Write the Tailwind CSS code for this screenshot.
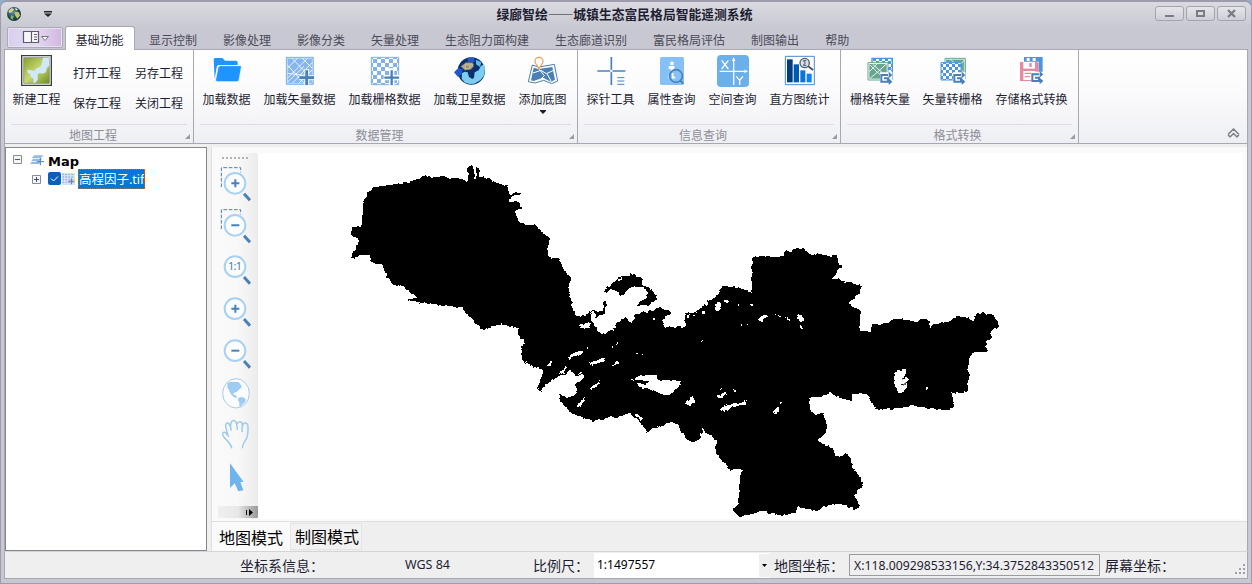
<!DOCTYPE html>
<html lang="zh-CN">
<head>
<meta charset="utf-8">
<title>绿廊智绘——城镇生态富民格局智能遥测系统</title>
<script src="https://cdn.jsdelivr.net/npm/@tailwindcss/browser@4"></script>
</head>
<body class="w-[1252px] h-[584px] overflow-hidden bg-[#8fb0d0] font-['Noto_Sans','Noto_Sans_CJK_SC',sans-serif] text-[12px] text-[#1e1e32]">
<svg class="absolute w-0 h-0">
  <defs>
    <pattern id="chk" width="24" height="24" patternUnits="userSpaceOnUse"><path d="M0 0h12v12H0zM12 12h12v12H12z" fill="#7fb2e5"/></pattern>
    <pattern id="chk2" width="18" height="18" patternUnits="userSpaceOnUse"><path d="M0 0h9v9H0zM9 9h9v9H9z" fill="#4a96e3"/></pattern>
    <symbol id="arrows" viewBox="0 0 38 40"><path d="M0 2h38v36H0z" fill="#fff" stroke="none"/><path d="M24 10H4v20h20M12 20h12v10h8" fill="none" stroke="#4a7fb8" stroke-width="6"/><path d="M26 0l11 10-11 10zM26 20l11 10-11 10z" fill="#4a7fb8"/></symbol>
    <symbol id="lens" viewBox="0 0 90 94"><circle cx="36" cy="38" r="31" fill="#fbfdff" stroke="#a9d1f1" stroke-width="6"/><path d="M63 69l18 20" stroke="#4a80b8" stroke-width="9"/></symbol>
    <filter id="rough" x="0" y="0" width="100%" height="100%" color-interpolation-filters="sRGB">
      <feTurbulence type="fractalNoise" baseFrequency=".22" numOctaves="2" seed="4" result="n"/>
      <feDisplacementMap in="SourceGraphic" in2="n" scale="4" xChannelSelector="R" yChannelSelector="G"/>
      <feComponentTransfer><feFuncA type="discrete" tableValues="0 1"/></feComponentTransfer>
    </filter>
  </defs>
</svg>
<div class="flex flex-col w-full h-full rounded-t-[7px] border-t-2 border-x border-[#9c9cac] bg-[#c8c8d2]">
  <!-- title bar -->
  <header class="flex items-center h-[25px] shrink-0 rounded-t-[6px] bg-linear-to-b from-[#dadae0] to-[#c9c9d2] pl-[6px] pr-[5px] pb-[2px]">
    <svg class="w-[14px] h-[14px]" viewBox="0 0 42 42"><defs><radialGradient id="gb" cx=".4" cy=".35"><stop offset="0" stop-color="#5c97a8"/><stop offset="1" stop-color="#143c46"/></radialGradient></defs><circle cx="21" cy="21" r="21" fill="url(#gb)"/><path d="M4 12L14 3l8 4-8 8-6 4z" fill="#dcd68a"/><path d="M22 14l14 2 3 10-8 9-6-9z" fill="#c9c16a"/><path d="M12 24l8 4-2 10-8-4z" fill="#8fb052"/><path d="M24 2l9 5-6 4z" fill="#e9ecc8"/></svg>
    <svg class="ml-[23px] mt-px w-[8px] h-[6px]" viewBox="0 0 8 6"><path d="M0 0h8v1.400H0zM0 2.500h8L4 6z" fill="#222230"/></svg>
    <h1 class="flex-1 text-center font-bold text-[12.800px] leading-none pl-[42px] pt-[2px] font-['Noto_Sans_CJK_SC',sans-serif]">绿廊智绘——城镇生态富民格局智能遥测系统</h1>
    <div class="flex gap-[2px]">
      <button class="w-[29px] h-[15px] rounded-[3px] border border-[#a4a4ae] bg-linear-to-b from-[#e6e6ea] to-[#cecfd6]"><svg class="w-full h-full" viewBox="0 0 27 13"><path d="M9 8h9v2H9z" fill="#7b7b88"/></svg></button>
      <button class="w-[29px] h-[15px] rounded-[3px] border border-[#a4a4ae] bg-linear-to-b from-[#e6e6ea] to-[#cecfd6]"><svg class="w-full h-full" viewBox="0 0 27 13"><path d="M10 4h7v5h-7z" fill="none" stroke="#7b7b88" stroke-width="2"/></svg></button>
      <button class="w-[29px] h-[15px] rounded-[3px] border border-[#a4a4ae] bg-linear-to-b from-[#e6e6ea] to-[#cecfd6]"><svg class="w-full h-full" viewBox="0 0 27 13"><path d="M10 3l7 7M17 3l-7 7" stroke="#7b7b88" stroke-width="2.300"/></svg></button>
    </div>
  </header>
  <!-- ribbon tabs -->
  <nav class="flex h-[22px] shrink-0 pl-[6px] text-[#4a4a58] leading-[27px] relative z-10">
    <button class="w-[56px] h-[21px] mr-[2px] rounded-[2px] border border-[#a9a9b8] outline outline-[#e4e2ee] -outline-offset-2 bg-linear-to-r from-[#d9cfee] via-[#e4dbf2] to-[#d2b5e0]">
      <svg class="w-full h-full" viewBox="0 0 54 19"><path d="M15.500 3.500h15v11h-15zM23.500 3.500v11M26 6.500h3M26 9h3M26 11.500h3" fill="#f8f8fa" stroke="#5c5c66" stroke-width="1.200"/><path d="M33.500 8.500h7l-3.500 4z" fill="#fff" stroke="#777783"/></svg>
    </button>
    <a class="w-[70px] h-[24px] -mt-px pr-px rounded-t-[3px] border border-b-0 border-[#a8a8b4] bg-white text-center text-[#1e1e32] leading-[27px]">基础功能</a>
    <a class="px-[13px] ml-px">显示控制</a><a class="px-[13px]">影像处理</a><a class="px-[13px]">影像分类</a><a class="px-[13px]">矢量处理</a><a class="px-[13px]">生态阻力面构建</a><a class="px-[13px]">生态廊道识别</a><a class="px-[13px]">富民格局评估</a><a class="px-[13px]">制图输出</a><a class="px-[13px]">帮助</a>
  </nav>
  <!-- ribbon -->
  <section class="flex h-[95px] shrink-0 ml-[3px] mr-[3px] border border-t-[#a8a8b4] border-[#a8a8b4] bg-linear-to-b from-white via-[#fafafc] to-[#eeeff3] leading-[16px]">
    <div class="flex flex-col w-[189px] border-r border-[#a8a8b4]">
      <div class="flex h-[74px] pl-[7px] pt-[5px]">
        <div class="flex flex-col items-center w-[49px]">
          <svg class="w-[31px] h-[31px]" viewBox="0 0 93 93"><defs><linearGradient id="np" x2="1" y2="1"><stop offset="0" stop-color="#86a02c"/><stop offset=".5" stop-color="#c8d873"/><stop offset="1" stop-color="#6e9018"/></linearGradient></defs><path d="M2 2h89v89H2z" fill="#fff" stroke="#39403a" stroke-width="4"/><path d="M8 8h77v77H8z" fill="url(#np)" stroke="#777" stroke-width="2"/><path d="M66 8h19v24l-8 8-2 12-10 4-10-2-6 6 2 12-6 10-9 2 2-12-8-6-2-8-8-4-2-8 8-2 12 4 10-8 10-4 4-8z" fill="#cfe8fa"/></svg>
          <span class="mt-[6px]">新建工程</span>
        </div>
        <div class="grid grid-cols-[62px_50px] grid-rows-[30px_30px] pl-[12px] pt-[4px] items-center w-[125px] whitespace-nowrap"><span>打开工程</span><span>另存工程</span><span>保存工程</span><span>关闭工程</span></div>
      </div>
      <div class="relative mx-[6px] h-[19px] pr-3 text-center leading-[21px] text-[#8d8d98] border-t border-[#dcdce2]">地图工程<svg class="absolute right-[-3px] bottom-[4px] w-[5px] h-[5px]" viewBox="0 0 5 5"><path d="M5 0v5H0z" fill="#9a9aa4"/></svg></div>
    </div>
    <div class="flex flex-col w-[384px] border-r border-[#a8a8b4]">
      <div class="flex gap-[12px] h-[74px] pl-[8px] pt-[5px] whitespace-nowrap">
        <div class="flex flex-col items-center w-[49px]"><svg class="w-[32px] h-[32px]" viewBox="0 0 96 96"><path d="M8 13l3-4h23l8 8h33q5 0 5 5v8H24q-6 0-7 7L11 72z" fill="#1f94ff"/><path d="M28 32h60q4 0 3 5l-7 38q-1 5-6 5H18q-5 0-4-6l7-36q1-6 7-6z" fill="#1f94ff" stroke="#fff" stroke-width="2"/></svg><span class="mt-[5px]">加载数据</span></div>
        <div class="flex flex-col items-center w-[73px]"><svg class="w-[32px] h-[32px]" viewBox="0 0 96 96"><path d="M7 7h81v81H7z" fill="#86b6ec" stroke="#5e9de0" stroke-width="2"/><path d="M10 10h75v75H10z" fill="none" stroke="#dcebfa" stroke-width="2"/><path d="M10 40L40 10M10 70L70 10M10 55l70 8M24 10l60 62M10 30l50 55M25 85L85 22M10 82l50-48M55 10l30 30M44 85l40-40" stroke="#fff" stroke-width="2.500" fill="none"/><path d="M60 42h16v18h15v16H76v15H60V76H45V60h15z" fill="#dce9f7"/><path d="M68 46v44M46 68h44" stroke="#4a7fb8" stroke-width="8"/></svg><span class="mt-[5px]">加载矢量数据</span></div>
        <div class="flex flex-col items-center w-[73px]"><svg class="w-[32px] h-[32px]" viewBox="0 0 96 96"><path d="M7 7h82v82H7z" fill="#fff"/><path d="M7 7h82v82H7z" fill="url(#chk)" stroke="#7fb2e5" stroke-width="3"/><path d="M60 40h16v20h15v16H76v15H60V76H44V60h16z" fill="#fff"/><path d="M68 46v44M46 68h44" stroke="#4a7fb8" stroke-width="7"/></svg><span class="mt-[5px]">加载栅格数据</span></div>
        <div class="flex flex-col items-center w-[73px]"><svg class="w-[32px] h-[32px]" viewBox="0 0 96 96"><circle cx="52" cy="48" r="41" fill="#0b2f6f"/><path d="M24 54l9-4 8 2 4 14 10 6 5-4 2-16 12-6 6-12 10-6 3 12-2 20-12 16-18 10-14 1-14-4-10-12z" fill="#7ccdf0"/><path d="M66 14l16 8-4 14-12-8z" fill="#5fb9e4"/><path d="M0 52l14-14 12 6-2 12-12 10zM40 8l20 0 2 12-20 8z" fill="#2059c9"/><path d="M20 34l16-12 20 0 4 12-10 10-18 2z" fill="#a8a8a8" stroke="#444" stroke-width="2"/><path d="M34 30h12v10H34zM50 28h8" stroke="#d7c36a" stroke-width="3" fill="#888"/></svg><span class="mt-[5px]">加载卫星数据</span></div>
        <div class="flex flex-col items-center w-[49px]"><svg class="w-[32px] h-[32px]" viewBox="0 0 96 96"><path d="M16 30l18 6 26-4 22-4 10 50-18 8-24-10-26 8-20-4z" fill="#fff" stroke="#4a7fb0" stroke-width="3"/><path d="M20 38l14 4 42-6 8 38-12 6-24-12-28 10-8-2z" fill="#4a80b4"/><path d="M18 54l24-8 16 10 22-10M36 42l16 20-10 10M60 56l12 22" stroke="#fff" stroke-width="3" fill="none"/><path d="M36 41c-5-10-12-14-12-22a12 12 0 0124 0c0 8-7 12-12 22z" fill="#fff" stroke="#f39a54" stroke-width="3.500"/></svg><span class="mt-[5px]">添加底图</span><svg class="mt-[2px] w-[6px] h-[4px]" viewBox="0 0 6 4"><path d="M0 0h6v1L3 4 0 1z" fill="#1e1e32"/></svg></div>
      </div>
      <div class="relative mx-[6px] h-[19px] pr-3 text-center leading-[21px] text-[#8d8d98] border-t border-[#dcdce2]">数据管理<svg class="absolute right-[-3px] bottom-[4px] w-[5px] h-[5px]" viewBox="0 0 5 5"><path d="M5 0v5H0z" fill="#9a9aa4"/></svg></div>
    </div>
    <div class="flex flex-col w-[263px] border-r border-[#a8a8b4]">
      <div class="flex gap-[12px] h-[74px] pl-[8px] pt-[5px] whitespace-nowrap">
        <div class="flex flex-col items-center w-[49px]"><svg class="w-[32px] h-[32px]" viewBox="0 0 96 96"><path d="M49 6v84M7 48h84" stroke="#4a80b8" stroke-width="5"/><circle cx="49" cy="48" r="4" fill="#fff"/><path d="M64 62h28v30H64z" fill="#fcfcfe"/><path d="M67 68h21M67 78h21M67 88h21" stroke="#4a80b8" stroke-width="3"/></svg><span class="mt-[5px]">探针工具</span></div>
        <div class="flex flex-col items-center w-[49px]"><svg class="w-[32px] h-[32px]" viewBox="0 0 96 96"><rect x="12" y="6" width="72" height="84" rx="5" fill="#85c1f5"/><path d="M48 20v10M38 38h12v26M38 66h18" stroke="#fff" stroke-width="10" fill="none"/><circle cx="60" cy="63" r="19" fill="#85c1f5" stroke="#4a80b8" stroke-width="5"/><path d="M50 54v14h8" stroke="#fff" stroke-width="5" fill="none"/><path d="M73 77l9 9" stroke="#4a80b8" stroke-width="6"/></svg><span class="mt-[5px]">属性查询</span></div>
        <div class="flex flex-col items-center w-[49px]"><svg class="w-[32px] h-[32px]" viewBox="0 0 96 96"><rect width="96" height="96" rx="12" fill="#6bb0eb"/><path d="M50 14v76M8 49h80" stroke="#fff" stroke-width="4"/><path d="M50 6l5 12H45zM94 49l-12-5v10z" fill="#fff"/><path d="M14 16l20 26M34 16L14 42M58 64l10 12 10-12M68 76v14" stroke="#fff" stroke-width="4" fill="none"/></svg><span class="mt-[5px]">空间查询</span></div>
        <div class="flex flex-col items-center w-[61px]"><svg class="w-[32px] h-[32px]" viewBox="0 0 96 96"><path d="M4 4h87v85H4z" fill="#fafcff" stroke="#4f8ad0" stroke-width="3"/><path d="M9 13h17v69H9z" fill="#003e80"/><path d="M29 28h16v54H29z" fill="#005bb0"/><path d="M49 46h15v36H49z" fill="#0a72dc"/><path d="M68 56h15v26H68z" fill="#0a80ff"/><circle cx="62" cy="24" r="14" fill="#d7e3ec" stroke="#52616c" stroke-width="4"/><path d="M67 17h-9l6 7-6 7h9" stroke="#333" stroke-width="2.500" fill="none"/><path d="M73 34l14 11" stroke="#3c4650" stroke-width="5"/></svg><span class="mt-[5px]">直方图统计</span></div>
      </div>
      <div class="relative mx-[6px] h-[19px] pr-3 text-center leading-[21px] text-[#8d8d98] border-t border-[#dcdce2]">信息查询<svg class="absolute right-[-3px] bottom-[4px] w-[5px] h-[5px]" viewBox="0 0 5 5"><path d="M5 0v5H0z" fill="#9a9aa4"/></svg></div>
    </div>
    <div class="flex flex-col w-[238px] border-r border-[#a8a8b4]">
      <div class="flex gap-[12px] h-[74px] pl-[9px] pt-[5px] whitespace-nowrap">
        <div class="flex flex-col items-center w-[60px]"><svg class="w-[32px] h-[32px] -mr-[2px] -ml-[3px]" viewBox="0 0 96 96"><path d="M24 10h61v62H24z" fill="#fff" stroke="#4a96e3" stroke-width="4"/><path d="M26 12h57v12H26zM72 24h12v24H72z" fill="url(#chk2)"/><path d="M12 23h60v52H12z" fill="#fff" stroke="#68a591" stroke-width="3"/><path d="M16 27h52v44H16z" fill="#68a591"/><path d="M18 30l22 22 28-26M18 70l22-18 26 20M26 28l42 36M16 50l24-24" stroke="#fff" stroke-width="2.500" fill="none"/><use href="#arrows" x="48" y="50" width="38" height="40"/></svg><span class="mt-[5px]">栅格转矢量</span></div>
        <div class="flex flex-col items-center w-[61px]"><svg class="w-[32px] h-[32px]" viewBox="0 0 96 96"><path d="M24 10h61v62H24z" fill="#68a591" stroke="#68a591" stroke-width="3"/><path d="M26 13h56v50H26z" fill="none" stroke="#fff" stroke-width="2"/><path d="M40 12l40 40M84 14L64 34" stroke="#fff" stroke-width="2.500"/><path d="M12 23h60v52H12z" fill="#fff"/><path d="M12 23h60v52H12z" fill="url(#chk2)" stroke="#4a96e3" stroke-width="3"/><use href="#arrows" x="48" y="50" width="38" height="40"/></svg><span class="mt-[5px]">矢量转栅格</span></div>
        <div class="flex flex-col items-center w-[73px]"><svg class="w-[32px] h-[32px]" viewBox="0 0 96 96"><path d="M0 0h96v96H0z" fill="#fff"/><path d="M24 6h56v52H68V20H24z" fill="#4a96e3"/><path d="M32 9h9v9h-9zM50 9h9v9h-9z" fill="#fff"/><path d="M12 21h52l4 4v53H12z" fill="#e88a9f"/><path d="M22 21h35v20H22z" fill="#fff"/><path d="M40 24h7v12h-7z" fill="#e88a9f"/><path d="M22 48h36v27H22z" fill="#fff"/><path d="M26 55h22M26 65h16" stroke="#e88a9f" stroke-width="4"/><use href="#arrows" x="45" y="48" width="38" height="40"/></svg><span class="mt-[5px]">存储格式转换</span></div>
      </div>
      <div class="relative mx-[6px] h-[19px] text-center leading-[21px] pr-1 text-[#8d8d98] border-t border-[#dcdce2]">格式转换<svg class="absolute right-[-3px] bottom-[4px] w-[5px] h-[5px]" viewBox="0 0 5 5"><path d="M5 0v5H0z" fill="#9a9aa4"/></svg></div>
    </div>
    <div class="flex flex-1 items-end justify-end pr-[7px] pb-[5px]"><svg class="w-[13px] h-[10px]" viewBox="0 0 13 10"><path d="M1 6.500L6.500 1 12 6.500M3 9l3.500-3.500L10 9M1 6.500L3 9M12 6.500L10 9" stroke="#7e7e8a" stroke-width="1.500" fill="none"/></svg></div>
  </section>
  <!-- work area -->
  <main class="flex h-[407px] shrink-0 mx-[3px] pt-[3px] bg-[#efeff0] border-x border-[#a8a8b4] text-black">
    <aside class="w-[202px] shrink-0 h-[404px] border border-[#828790] bg-white pl-[7px] pt-[4px]">
      <div class="flex items-center h-[19px]"><svg class="w-[9px] h-[9px] -mt-[4px]" viewBox="0 0 9 9"><path d="M.5.5h8v8h-8z" fill="#f6f6f6" stroke="#8c8c8c"/><path d="M2 4.500h5" stroke="#3a50a0"/></svg><svg class="ml-[8px] -mt-[4px] w-[14px] h-[12px]" viewBox="0 0 42 36"><path d="M13 4h28l-8 8H5zM9 14h28l-8 7H4zM5 23h28l-6 7H0z" fill="#92bce6"/><path d="M31 12v22M20 23h22" stroke="#4a7fb8" stroke-width="3"/></svg><b class="ml-[4px] text-[13px] leading-[19px] font-['DejaVu_Sans']">Map</b></div>
      <div class="flex items-center h-[20px] pl-[19px] -mt-[2px]"><svg class="w-[9px] h-[9px]" viewBox="0 0 9 9"><path d="M.5.5h8v8h-8z" fill="#f6f6f6" stroke="#8c8c8c"/><path d="M2 4.500h5M4.500 2v5" stroke="#3a50a0"/></svg><svg class="ml-[7px] w-[13px] h-[13px] -mt-px" viewBox="0 0 13 13"><rect width="13" height="13" rx="2" fill="#0a5fb8"/><path d="M3 6.500l2.500 2.500L10 4.500" stroke="#fff" fill="none"/></svg><svg class="ml-px w-[13px] h-[12px]" viewBox="0 0 39 36"><path d="M0 0h39v36H0z" fill="#d5e4f4"/><path d="M1 4h37M1 12h37M1 20h37M1 28h37" stroke="#8fb6e0" stroke-width="4" stroke-dasharray="5 4"/><path d="M28 16v18M19 25h18" stroke="#4a7fb8" stroke-width="3"/></svg><span class="ml-[3px] w-[67px] h-[20px] border border-dotted border-[#c86a10] bg-[#0078d7] text-white text-[12.500px] leading-[20px] whitespace-nowrap overflow-hidden">高程因子.tif</span></div>
    </aside>
    <section class="flex flex-col flex-1 min-w-0 ml-[4px] border-l border-[#e0e0e0]">
      <div class="flex h-[375px] shrink-0 pt-[6px] pl-[6px] pb-[2px] bg-[#fafafa] border-b border-[#dfdfdf]">
        <div class="flex flex-col w-[40px] shrink-0 items-center pr-[4px] bg-linear-to-r from-[#fafafa] via-[#f8f8f8] to-[#ececec] rounded-[3px] overflow-hidden">
          <div class="h-[9px] w-full flex items-center pl-[4px]"><svg class="w-[26px] h-[2px]" viewBox="0 0 26 2"><path d="M0 1h26" stroke="#b4b4b4" stroke-width="2" stroke-dasharray="2 2"/></svg></div>
          <svg class="w-[32px] h-[42px] shrink-0" viewBox="0 0 96 126"><path d="M4 75V17h58v14" fill="none" stroke="#4a80b8" stroke-width="3" stroke-dasharray="11 5"/><use href="#lens" x="9" y="26" width="90" height="94"/><path d="M34 64h24M46 52v24" stroke="#4a80b8" stroke-width="6"/></svg>
          <svg class="w-[32px] h-[42px] shrink-0" viewBox="0 0 96 126"><path d="M4 75V17h58v14" fill="none" stroke="#4a80b8" stroke-width="3" stroke-dasharray="11 5"/><use href="#lens" x="9" y="26" width="90" height="94"/><path d="M34 64h24" stroke="#4a80b8" stroke-width="6"/></svg>
          <svg class="w-[32px] h-[42px] shrink-0" viewBox="0 0 96 126"><use href="#lens" x="9" y="24" width="90" height="94"/><text x="45" y="73" text-anchor="middle" font-size="33" fill="#4a80b8" font-family="Noto Sans" textLength="42">1:1</text></svg>
          <svg class="w-[32px] h-[42px] shrink-0" viewBox="0 0 96 126"><use href="#lens" x="9" y="24" width="90" height="94"/><path d="M34 62h24M46 50v24" stroke="#4a80b8" stroke-width="6"/></svg>
          <svg class="w-[32px] h-[42px] shrink-0" viewBox="0 0 96 126"><use href="#lens" x="9" y="24" width="90" height="94"/><path d="M34 62h24" stroke="#4a80b8" stroke-width="6"/></svg>
          <svg class="w-[32px] h-[42px] shrink-0" viewBox="0 0 96 126"><ellipse cx="48" cy="64" rx="40" ry="44" fill="#fafcfe" stroke="#a5cdf0" stroke-width="3"/><path d="M22 34l8-4 26 0 6 8 4 8-8 6-8 8-8 2-2 6 8 2 4 8-10-2-10-10-6-14-4-6zM58 76l12 0 8 7-4 9-8 6-4 6-4-1 0-12-5-8z" fill="#9fccf2"/></svg>
          <svg class="w-[32px] h-[42px] shrink-0" viewBox="0 0 96 126"><path d="M35 103C34 86 14 78 8 62 7 54 15 52 20 60L27 68M24 64C20 48 14 38 18 30 24 22 30 30 34 50M33 46C30 34 32 22 38 20 46 18 51 24 52 48M51 30C54 22 66 20 67 32L66 54M67 36C70 24 82 24 84 36 85 60 82 72 76 80 70 88 67 96 67 103" fill="none" stroke="#9fcaec" stroke-width="4.500"/></svg>
          <svg class="w-[32px] h-[42px] shrink-0" viewBox="0 0 96 126"><path d="M30 22v74l14-14 11 24 15-3-9-25h10z" fill="#6fb4ea"/></svg>
          <div class="mt-auto mb-px w-[40px] self-start h-[12px] shrink-0 bg-linear-to-r from-[#f0f0f0] via-[#e8e8e8] to-[#999] flex justify-end items-center pr-[5px]"><svg class="w-[7px] h-[7px]" viewBox="0 0 7 7"><path d="M0 1h1v5H0zM3 0l4 3.500L3 7z"/></svg></div>
        </div>
        <svg class="w-[985px] shrink-0 h-[366px] bg-white" viewBox="258 153 985 366">
          <g filter="url(#rough)">
          <rect x="258" y="153" width="985" height="366" fill="none"/>
          <path shape-rendering="crispEdges" fill-rule="evenodd" d="M365 197L373 187 383 186 393 184 408 182 418 179 425 175 430 178 443 176 455 179 468 181 468 167 473 165 474 178 476 178 476 167 479 169 479 177 488 178 495 182 508 187 509 194 521 193 521 195 510 196 509 202 520 202 522 209 515 210 516 215 520 223 535 225 549 238 550 243 547 245 547 255 551 259 558 256 563 268 572 281 568 287 575 317 588 314 593 311 603 311 603 302 607 297 605 290 613 283 618 277 632 274 642 278 642 285 647 287 657 297 656 301 650 304 660 307 665 310 673 311 662 320 665 327 685 327 685 313 697 312 703 305 710 300 720 293 722 286 737 287 752 292 752 257 767 256 783 257 786 250 790 252 797 248 807 250 808 253 815 256 817 253 827 256 837 255 837 262 842 266 832 278 847 282 862 286 857 296 848 303 860 310 860 330 871 332 872 325 888 323 893 319 900 319 917 322 920 319 929 321 930 329 933 324 948 322 957 316 968 318 973 321 977 313 992 314 998 322 998 328 991 331 991 338 985 342 988 352 973 352 969 361 968 370 970 375 968 382 968 391 952 393 954 407 945 410 913 406 890 409 876 410 870 398 865 393 853 394 852 401 837 397 830 392 825 396 809 399 810 408 815 415 823 413 827 425 826 434 818 440 833 449 835 455 842 456 846 452 850 458 852 467 860 477 863 487 857 490 855 496 859 505 857 509 848 508 842 504 827 505 817 511 802 508 797 507 795 513 781 516 773 513 760 512 748 515 740 517 732 510 738 505 740 477 742 469 730 471 723 462 718 457 715 447 717 440 702 429 701 438 692 443 682 434 678 425 672 422 660 426 647 432 638 420 630 413 617 418 610 417 593 421 573 414 565 407 559 398 560 395 547 387 543 393 537 388 542 378 543 370 532 366 522 360 521 350 525 340 519 337 519 328 510 327 502 323 485 329 480 328 468 315 462 307 450 306 432 304 408 301 408 299 418 298 403 286 395 285 387 278 383 266 372 262 369 255 360 255 354 259 351 254 356 250 359 240 351 235 352 227 362 226 363 205z"/>
          <g transform="translate(510 260) scale(.33333)" fill="#fff" shape-rendering="crispEdges">
            <path d="M238 162l17-8 0 20 30-14 6-30-8-20 18-24 24 10 10 12 22-24 40-4 18 16-6 18-32 24 58-6 10-8 6 12-24 16-50 10-12 26-18-16-32 20-26 28-26-4-10-24zM95 388l20-20 30-20 20-6 16-14 14 18 28 0-4 14-22 12 4 18-12 18-20 6-22-14-14 10-36 0zM210 192l30-4v16h-26zM295 205l24-16-8 24zM362 360l24-12 50-4 12 16 66 2-2 12-18 14-14 18-20 0-24-12-22-10-24-2-10-14 28 6 8-10-24-4zM525 430l24-22 4 14-12 16zM170 292l20-12 24-8 2 8-38 16zM108 318l18-14v12zM146 342l22-18-8 16zM236 312l20-12 28-6-2 10-34 10zM304 316l22-12v8zM240 390l16-18 14-12-6 16-20 14zM202 436l22-26-4 14-12 22zM200 345l12-12 8 6zM372 465l10-4 6 8 12 2-10 10zM614 404l10 2 20-8 6 6-20 10zM625 448l20-14 36-4 28-10-2 14-42 8-18 14zM615 140l8-14 12 4-4 20-14 4zM640 120h18v6h-14zM552 155l10-6v14zM575 150h9v12h-9zM580 126l16-6-4 18zM545 165h8v8zM320 60l18-6-6 10z"/>
            <path d="M742 180l10-10 14-6 6 4-20 16zM795 164h18v5h-18zM824 170l14 8-2 10zM865 163l12 4 6 12-12 8-6-10zM870 195l8 6v6h-6zM790 455l16-18 2 18-8 8zM1152 340l14-10 24-4-2 18-12 14 16-4 2 18-12 22-16 6-12-22z"/>
            <path d="M530 168h6M695 196h5M710 194h5M575 243h4M632 386h4M673 394h4M379 281h4M392 284h4M430 178h5M305 262h5M320 249h4M230 264h5M545 650h10M552 665h8M808 430h5M710 420h5M1252 385h5M680 135h5M720 135h5M765 205h4" stroke="#fff" stroke-width="5"/>
          </g>
          <path d="M902 379l5-2M902 386l5-4" stroke="#000"/>
          </g>
        </svg>
      </div>
      <div class="flex flex-1 text-[16px] leading-[30px]">
        <a class="w-[78px] pl-[7px] h-[29px] leading-[33px] bg-[#fafafa]">地图模式</a><a class="w-[72px] pl-[4px] h-[27px] mt-px border border-[#e4e4e4] bg-[#f2f2f2] leading-[27px]">制图模式</a>
      </div>
    </section>
  </main>
  <!-- status bar -->
  <footer class="flex h-[28px] shrink-0 mx-[3px] items-center bg-[#efeff0] border border-[#a8a8b4] border-t-[#d4d4d6] text-[14px] whitespace-nowrap">
    <span class="w-[165px] ml-[235px] pt-px">坐标系信息：</span><span class="w-[128px] pt-px text-[12.500px]">WGS 84</span><span class="w-[61px] pt-px">比例尺：</span>
    <div class="flex w-[176px] h-[25px] items-center bg-white pl-[3px] text-black text-[12px]"><span class="flex-1">1:1497557</span><span class="flex items-center justify-center w-[11px] h-[23px] bg-[#efeff0]"><svg class="w-[5px] h-[3px]" viewBox="0 0 5 3"><path d="M0 0h5L2.500 3z"/></svg></span></div>
    <span class="w-[75px] ml-[4px] pt-px">地图坐标：</span>
    <span class="w-[251px] h-[22px] border border-[#9c9c9c] pl-[4px] leading-[21px] text-[12.250px]">X:118.009298533156,Y:34.3752843350512</span>
    <span class="ml-[5px] flex-1 pt-px">屏幕坐标：</span>
    <svg class="w-[11px] h-[11px] mr-px mt-[8px]" viewBox="0 0 11 11"><path d="M8 0h2v2H8zM4 4h2v2H4zM8 4h2v2H8zM0 8h2v2H0zM4 8h2v2H4zM8 8h2v2H8z" fill="#a0a0a8"/></svg>
  </footer>
  <div class="flex-1 border-b border-[#9c9cac]"></div>
</div>
</body>
</html>
